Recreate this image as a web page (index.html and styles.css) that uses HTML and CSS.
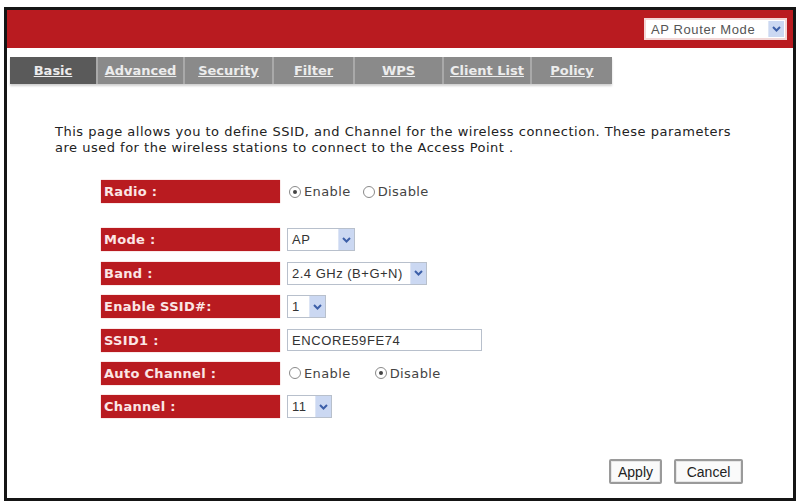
FILE: index.html
```html
<!DOCTYPE html>
<html lang="en">
<head>
    <meta charset="UTF-8">
    <title>Wireless Basic Settings</title>
    <link rel="stylesheet" href="styles.css">
</head>
<body>
    <div class="frame">
        <div class="header">
            <div class="select mode-select">
                <span class="select-text">AP Router Mode</span>
                <span class="arrow"><svg width="9" height="6" viewBox="0 0 9 6"><path d="M1 1 L4.5 4.5 L8 1" fill="none" stroke="#3c5fa8" stroke-width="2"/></svg></span>
            </div>
        </div>

        <div class="tabs">
            <a class="tab active" style="width: 86px">Basic</a>
            <a class="tab" style="width: 87px">Advanced</a>
            <a class="tab" style="width: 89px">Security</a>
            <a class="tab" style="width: 81px">Filter</a>
            <a class="tab" style="width: 89px">WPS</a>
            <a class="tab" style="width: 88px">Client List</a>
            <a class="tab" style="width: 82px">Policy</a>
        </div>

        <p class="intro">This page allows you to define SSID, and Channel for the wireless connection. These parameters<br>are used for the wireless stations to connect to the Access Point .</p>

        <div class="form">
            <div class="row radio-row">
                <div class="label">Radio :</div>
                <div class="value">
                    <label class="radio"><span class="dot on"></span>Enable</label>
                    <label class="radio"><span class="dot"></span>Disable</label>
                </div>
            </div>

            <div class="row">
                <div class="label">Mode :</div>
                <div class="value">
                    <div class="select" style="width: 68px">
                        <span class="select-text">AP</span>
                        <span class="arrow"><svg width="9" height="6" viewBox="0 0 9 6"><path d="M1 1 L4.5 4.5 L8 1" fill="none" stroke="#3c5fa8" stroke-width="2"/></svg></span>
                    </div>
                </div>
            </div>
            <div class="row">
                <div class="label">Band :</div>
                <div class="value">
                    <div class="select" style="width: 140px">
                        <span class="select-text">2.4 GHz (B+G+N)</span>
                        <span class="arrow"><svg width="9" height="6" viewBox="0 0 9 6"><path d="M1 1 L4.5 4.5 L8 1" fill="none" stroke="#3c5fa8" stroke-width="2"/></svg></span>
                    </div>
                </div>
            </div>
            <div class="row">
                <div class="label">Enable SSID#:</div>
                <div class="value">
                    <div class="select" style="width: 39px">
                        <span class="select-text">1</span>
                        <span class="arrow"><svg width="9" height="6" viewBox="0 0 9 6"><path d="M1 1 L4.5 4.5 L8 1" fill="none" stroke="#3c5fa8" stroke-width="2"/></svg></span>
                    </div>
                </div>
            </div>
            <div class="row">
                <div class="label">SSID1 :</div>
                <div class="value">
                    <input class="text-input" type="text" value="ENCORE59FE74">
                </div>
            </div>
            <div class="row">
                <div class="label">Auto Channel :</div>
                <div class="value">
                    <label class="radio wide"><span class="dot"></span>Enable</label>
                    <label class="radio"><span class="dot on"></span>Disable</label>
                </div>
            </div>
            <div class="row">
                <div class="label">Channel :</div>
                <div class="value">
                    <div class="select" style="width: 45px">
                        <span class="select-text">11</span>
                        <span class="arrow"><svg width="9" height="6" viewBox="0 0 9 6"><path d="M1 1 L4.5 4.5 L8 1" fill="none" stroke="#3c5fa8" stroke-width="2"/></svg></span>
                    </div>
                </div>
            </div>
        </div>

        <div class="buttons">
            <button class="btn apply">Apply</button>
            <button class="btn cancel">Cancel</button>
        </div>
    </div>
</body>
</html>
```

FILE: styles.css
```css
:root {
    --red: #b91b20;
    --tab-grey: #8a8a8a;
    --tab-dark: #5a5a5a;
    --text-color: #333;
}

* {
    margin: 0;
    padding: 0;
    box-sizing: border-box;
}

body {
    background: #fff;
    font-family: "DejaVu Sans", Verdana, sans-serif;
    color: var(--text-color);
}

.frame {
    margin: 7px 5px 0 4px;
    width: 792px;
    height: 494px;
    border: 3px solid #151515;
    display: flex;
    flex-direction: column;
}

.header {
    height: 38px;
    background: var(--red);
    display: flex;
    justify-content: flex-end;
    align-items: center;
    padding-right: 6px;
}

.tabs {
    display: flex;
    margin: 9px 0 0 3px;
    height: 27px;
    box-shadow: 0 2px 2px #d0d0d0;
    width: 602px;
}

.tab {
    display: flex;
    align-items: center;
    justify-content: center;
    background: var(--tab-grey);
    border-left: 2px solid #a9a9a9;
    color: #ececec;
    font-size: 13px;
    font-weight: bold;
    text-decoration: underline;
}

.tab.active {
    background: var(--tab-dark);
    border-left: none;
}

.intro {
    margin: 40px 0 0 48px;
    font-size: 13px;
    letter-spacing: 0.5px;
    line-height: 16px;
    color: #222;
    white-space: nowrap;
}

.form {
    margin: 24px 0 0 94px;
    display: flex;
    flex-direction: column;
    gap: 10.4px;
}

.row {
    display: flex;
    align-items: center;
    gap: 7px;
    height: 23px;
}

.radio-row {
    margin-bottom: 15px;
}

.label {
    width: 179px;
    height: 23px;
    background: var(--red);
    color: #fbe6e6;
    font-size: 13px;
    letter-spacing: 0.3px;
    font-weight: bold;
    padding-left: 3px;
    line-height: 23px;
    box-shadow: 0 0 1px #e08080;
}

.value {
    display: flex;
    align-items: center;
    font-size: 13px;
    letter-spacing: 0.4px;
    color: #444;
}

.radio {
    display: flex;
    align-items: center;
    margin-right: 10px;
}

.radio.wide {
    margin-right: 22px;
}

.dot {
    width: 12px;
    height: 12px;
    border: 1px solid #8a8a8a;
    border-radius: 50%;
    margin: 0 3px 0 2px;
    display: flex;
    align-items: center;
    justify-content: center;
    background: #fff;
}

.dot.on::after {
    content: "";
    width: 4px;
    height: 4px;
    border-radius: 50%;
    background: #444;
}

.select {
    height: 23px;
    border: 1px solid #b8c0cc;
    background: #fff;
    display: flex;
    align-items: center;
    justify-content: space-between;
    font-family: "Liberation Sans", Arial, sans-serif;
    font-size: 13px;
    letter-spacing: 0.5px;
    color: #333;
    padding-left: 4px;
    white-space: nowrap;
}

.arrow {
    width: 16px;
    height: 100%;
    flex-shrink: 0;
    background: #cbd8f2;
    border-left: 1px solid #dde5f5;
    display: flex;
    align-items: center;
    justify-content: center;
}

.mode-select {
    width: 143px;
    height: 22px;
    border: 2px solid #f2d6d6;
    padding-left: 5px;
    letter-spacing: 0.6px;
    color: #555;
}

.mode-select .arrow {
    margin-right: 1px;
    height: 16px;
}

.text-input {
    width: 195px;
    height: 22px;
    border: 1px solid #b8c0cc;
    padding-left: 4px;
    font-family: "Liberation Sans", Arial, sans-serif;
    font-size: 13px;
    letter-spacing: 0.6px;
    color: #333;
}

.buttons {
    margin-top: auto;
    display: flex;
    justify-content: flex-end;
    gap: 12px;
    padding: 0 50px 14px 0;
}

.btn {
    height: 25px;
    background: #fafafa;
    border: 2px solid #9a9a9a;
    border-radius: 2px;
    box-shadow: inset 0 0 0 1px #e6e6e6;
    font-family: "Liberation Sans", Arial, sans-serif;
    font-size: 14px;
    color: #222;
}

.apply {
    width: 53px;
}

.cancel {
    width: 69px;
}
```
